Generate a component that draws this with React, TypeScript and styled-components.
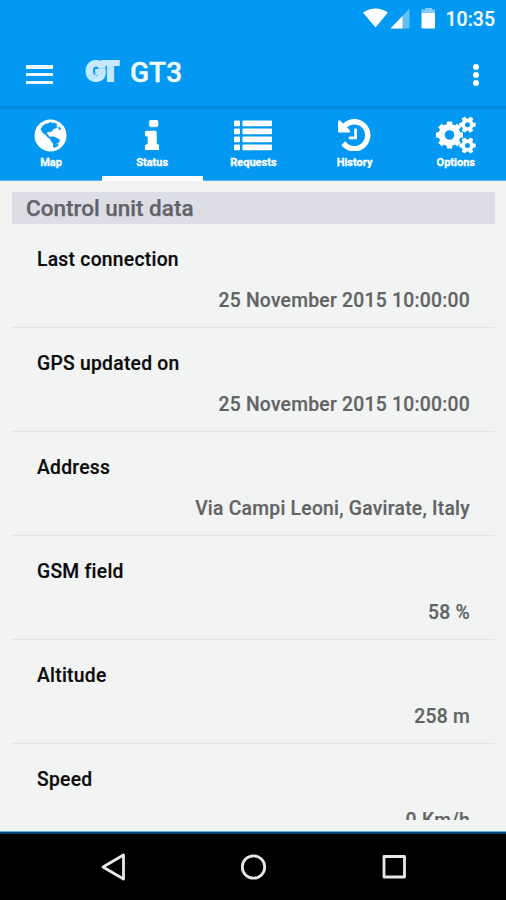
import React from 'react';
import styled, { createGlobalStyle } from 'styled-components';

const GlobalStyle = createGlobalStyle`
  * { box-sizing: border-box; }
  body { margin: 0; font-family: Roboto, 'Noto Sans', sans-serif; background: #f2f4f4; }
  svg { display: block; }
`;

const Screen = styled.div`
  width: 506px;
  height: 900px;
  display: flex;
  flex-direction: column;
  overflow: hidden;
  background: #f2f4f4;
`;

const StatusBar = styled.header`
  height: 38px;
  flex: none;
  display: flex;
  justify-content: flex-end;
  align-items: center;
  padding-right: 11px;
  background: #0399f2;
  color: #f4fbff;
`;

const Clock = styled.time`
  font-size: 19.5px;
  font-weight: 500;
  line-height: 38px;
  margin: 1px 0 0 9px;
  -webkit-text-stroke: 0.15px #f4fbff;
`;

const AppBar = styled.div`
  height: 68px;
  flex: none;
  display: flex;
  align-items: center;
  padding: 0 26px 0 26px;
  background: #0399f2;
`;

const MenuButton = styled.button`
  width: 27px;
  height: 19px;
  margin-top: 5px;
  padding: 0;
  border: 0;
  background: none;
  display: flex;
  flex-direction: column;
  justify-content: space-between;
`;

const MenuBar = styled.span`
  width: 27px;
  height: 3.5px;
  background: #ecf8ff;
`;

const Logo = styled.svg`
  margin: -2px 0 0 27px;
  overflow: visible;
`;

const Title = styled.h1`
  flex: 1;
  margin: 1px 0 0 5px;
  font-size: 28px;
  font-weight: 500;
  line-height: 68px;
  color: #f2faff;
  -webkit-text-stroke: 0.4px #f2faff;
`;

const MoreButton = styled.button`
  width: 7px;
  height: 23px;
  margin-top: 6px;
  padding: 0;
  border: 0;
  background: none;
  display: flex;
  flex-direction: column;
  justify-content: space-between;
`;

const Dot = styled.span`
  width: 6.4px;
  height: 6.4px;
  border-radius: 50%;
  background: #fff;
`;

const Tabs = styled.nav`
  height: 75px;
  flex: none;
  display: grid;
  grid-template-columns: repeat(5, 1fr);
  background: linear-gradient(#057fd0 0, #0589dd 1.5px, #0399f2 5px);
  border-bottom: 1px solid #62affa;
`;

const Tab = styled.button<{ $active?: boolean }>`
  display: flex;
  flex-direction: column;
  align-items: center;
  padding: 10px 0 0;
  border: 0;
  margin: 0 -0.4px -1px 0.4px;
  border-bottom: 5px solid ${(p) => (p.$active ? '#fcfdff' : 'transparent')};
  background: none;
  color: #fff;
  font-family: inherit;
`;

const TabIcon = styled.span`
  height: 38px;
  display: flex;
  align-items: center;
  justify-content: center;
`;

const TabLabel = styled.span`
  font-size: 11px;
  font-weight: 700;
  line-height: 18px;
  -webkit-text-stroke: 0.3px #fff;
`;

const Content = styled.main`
  height: 639px;
  flex: none;
  padding: 11px 11px 0 12px;
  overflow: hidden;
`;

const SectionTitle = styled.h2`
  height: 32px;
  margin: 0;
  padding-left: 14px;
  font-size: 22.5px;
  font-weight: 500;
  line-height: 33px;
  background: #dddde5;
  color: #626268;
  -webkit-text-stroke: 0.25px #626268;
`;

const Row = styled.section`
  height: 104px;
  padding: 20px 25px 0;
  border-bottom: 1.5px solid #e3e5e5;
`;

const Label = styled.h3`
  margin: 0;
  font-size: 19.3px;
  font-weight: 500;
  line-height: 31px;
  letter-spacing: 0.27px;
  color: #0c0c0c;
  -webkit-text-stroke: 0.2px #0c0c0c;
`;

const Value = styled.p`
  margin: 10px 0 0;
  font-size: 19.3px;
  font-weight: 500;
  line-height: 31px;
  letter-spacing: 0.26px;
  text-align: right;
  color: #626464;
  -webkit-text-stroke: 0.2px #626464;
`;

const ContentEnd = styled.div`
  flex: 1;
  border-bottom: 1px solid #65aee9;
`;

const NavigationBar = styled.footer`
  height: 68px;
  flex: none;
  display: flex;
  justify-content: center;
  border-top: 2px solid #05407c;
  background: #000;
`;

const Globe = () => (
  <svg width="33" height="33" viewBox="0 0 33 33">
    <circle cx="16.5" cy="16.5" r="16" fill="#fff" />
    <path d="M6.3 10.5L8.5 7l3-2.2L14 4.6l3.3-1.9.8 1.6 2.7-.6 3.2 2.3-2 .6 1.8 1.5-2 1.4-2 .3-1.5 2.2-2.6 1.3-2-.4-1 1.8 1.5.8 1 2 2.2.3 1.5 1.6-1.6.5-3.4-1.2-2.4-3-2.8-1.6-1.6-3z" fill="#0399f2" />
    <path d="M15.8 18.5l3.2-1.2 4 1.6 3 2-.9 2.6-3.1 1.6-1.8 3.2-1.3-.4.3-3.2-2.6-3.1zM18.7 28l2-2.4 4-1.2-.7 2.6-3.2 1.7zM24.6 7.3l2.3 2-.6 1.8-1.8-.6z" fill="#0399f2" />
  </svg>
);

const Info = () => (
  <svg width="14.5" height="30" viewBox="0 128 640 1408" preserveAspectRatio="none" fill="#fff" stroke="#fff" strokeWidth="20">
    <path d="M640 1344v128q0 26-19 45t-45 19h-512q-26 0-45-19t-19-45v-128q0-26 19-45t45-19h64v-384h-64q-26 0-45-19t-19-45v-128q0-26 19-45t45-19h384q26 0 45 19t19 45v576h64q26 0 45 19t19 45zm-64-1152v192q0 26-19 45t-45 19h-256q-26 0-45-19t-19-45v-192q0-26 19-45t45-19h256q26 0 45 19t19 45z" />
  </svg>
);

const ListLines = () => (
  <svg width="38" height="31" viewBox="0 0 38 31" fill="#fff">
    {[0.5, 8.5, 16.5, 24.5].map((y) => (
      <g key={y}>
        <rect x="0" y={y} width="6" height="5.8" rx=".8" />
        <rect x="8.5" y={y} width="29.5" height="5.8" rx=".8" />
      </g>
    ))}
  </svg>
);

const History = () => (
  <svg width="32.5" height="32.5" viewBox="0 128 1536 1536" fill="#fff">
    <path d="M1536 896q0 156-61 298t-164 245-245 164-298 61q-172 0-327-72.5t-264-204.5q-7-10-6.5-22.5t8.5-20.5l137-138q10-9 25-9 16 2 23 12 73 95 179 147t225 52q104 0 198.5-40.5t163.5-109.5 109.5-163.5 40.5-198.5-40.5-198.5-109.5-163.5-163.5-109.5-198.5-40.5q-98 0-188 35.5t-160 101.5l137 138q31 30 14 69-17 40-59 40h-448q-26 0-45-19t-19-45v-448q0-42 40-59 39-17 69 14l130 129q107-101 244.5-156.5t284.5-55.5q156 0 298 61t245 164 164 245 61 298zm-640-288v448q0 14-9 23t-23 9h-320q-14 0-23-9t-9-23v-64q0-14 9-23t23-9h224v-352q0-14 9-23t23-9h64q14 0 23 9t9 23z" />
  </svg>
);

type GearProps = { cx: number; cy: number; inner: number; body: number; outer: number; tooth: number; teeth: number };

const Gear = ({ cx, cy, inner, body, outer, tooth, teeth }: GearProps) => (
  <g transform={`translate(${cx} ${cy})`}>
    <circle r={(inner + body) / 2} fill="none" stroke="#fff" strokeWidth={body - inner} />
    {Array.from({ length: teeth }, (_, i) => (
      <rect key={i} x={body - 1} y={-tooth / 2} width={outer - body + 1} height={tooth} rx=".6" fill="#fff" transform={`rotate(${(360 / teeth) * i})`} />
    ))}
  </g>
);

const Cogs = () => (
  <svg width="40" height="38" viewBox="0 0 40 38">
    <Gear cx={13.5} cy={19} inner={4.8} body={11} outer={13.5} tooth={5.4} teeth={8} />
    <Gear cx={31.5} cy={8.7} inner={2.5} body={6.2} outer={8.2} tooth={4.1} teeth={6} />
    <Gear cx={31.5} cy={29.5} inner={2.5} body={6.2} outer={8.2} tooth={4.1} teeth={6} />
  </svg>
);

const tabs = [
  { label: 'Map', icon: <Globe /> },
  { label: 'Status', icon: <Info />, active: true },
  { label: 'Requests', icon: <ListLines /> },
  { label: 'History', icon: <History /> },
  { label: 'Options', icon: <Cogs /> },
];

const rows = [
  ['Last connection', '25 November 2015 10:00:00'],
  ['GPS updated on', '25 November 2015 10:00:00'],
  ['Address', 'Via Campi Leoni, Gavirate, Italy'],
  ['GSM field', '58 %'],
  ['Altitude', '258 m'],
  ['Speed', '0 Km/h'],
];

export default function App() {
  return (
    <>
      <GlobalStyle />
      <Screen>
        <StatusBar>
          <svg width="74" height="22" viewBox="0 0 74 22" fill="#fff">
            <path d="M0 4.5Q12.500-3.500 25 4.500L12.500 19.500z" />
            <path d="M46.500 .5v20H27.500z" opacity=".38" />
            <path d="M39.500 7.900V20.500H27.500z" />
            <path d="M62 0h7v1.500h3v4H58.500v-4H62z" opacity=".5" />
            <rect x="58.500" y="5" width="13.500" height="15.500" rx="1" />
          </svg>
          <Clock>10:35</Clock>
        </StatusBar>
        <AppBar>
          <MenuButton aria-label="Menu">
            <MenuBar /><MenuBar /><MenuBar />
          </MenuButton>
          <Logo width="45" height="34" viewBox="0 0 45 34">
            <text x="5.500" y="26.500" fontFamily="Inter" fontWeight="900" fontSize="26.500" letterSpacing="-3.400" fill="#c6e9fd" stroke="#c6e9fd" strokeWidth="1.800">GT</text>
            <path d="M8 22q9-2 14-9M11 25q8-2 12-7M26 17l7-4" stroke="#7ccaf8" strokeWidth=".7" fill="none" opacity=".7" />
          </Logo>
          <Title>GT3</Title>
          <MoreButton aria-label="More options">
            <Dot /><Dot /><Dot />
          </MoreButton>
        </AppBar>
        <Tabs>
          {tabs.map((tab) => (
            <Tab key={tab.label} $active={tab.active}>
              <TabIcon>{tab.icon}</TabIcon>
              <TabLabel>{tab.label}</TabLabel>
            </Tab>
          ))}
        </Tabs>
        <Content>
          <SectionTitle>Control unit data</SectionTitle>
          {rows.map(([label, value]) => (
            <Row key={label}>
              <Label>{label}</Label>
              <Value>{value}</Value>
            </Row>
          ))}
        </Content>
        <ContentEnd />
        <NavigationBar>
          <svg width="506" height="66" viewBox="0 0 506 66" fill="none" stroke="#e8e8e8" strokeWidth="2.8" strokeLinejoin="round">
            <path d="M123.500 21v24L103 33z" />
            <circle cx="253.500" cy="33" r="11.200" />
            <rect x="384" y="22.500" width="20.500" height="20.500" />
          </svg>
        </NavigationBar>
      </Screen>
    </>
  );
}
